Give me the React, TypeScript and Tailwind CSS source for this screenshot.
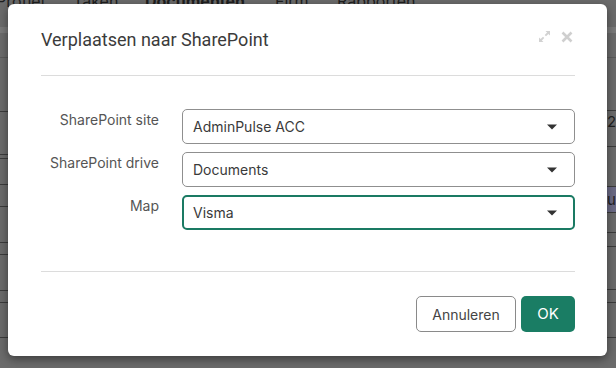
import React from "react";

function Caret() {
  return (
    <svg width="10" height="6" viewBox="0 0 10 6" className="shrink-0">
      <path d="M0 0.5 L10 0.5 L5 5.5 Z" fill="#333" />
    </svg>
  );
}

function Select({ value, active }: { value: string; active?: boolean }) {
  return (
    <div
      className={
        active
          ? "flex-1 h-[35px] rounded-[5px] border-2 border-[#1a7a63] flex items-center pl-[9px] pr-[16px]"
          : "flex-1 h-[35px] rounded-[5px] border border-[#8f8f8f] flex items-center pl-[10px] pr-[17px]"
      }
    >
      <span className="flex-1 text-[14px] text-[#3a3a3a] leading-5">{value}</span>
      <Caret />
    </div>
  );
}

function Row({ label, value, active }: { label: string; value: string; active?: boolean }) {
  return (
    <div className="flex items-start">
      <div className="w-[118px] text-right text-[14px] leading-5 text-[#555] pt-[1px]">{label}</div>
      <div className="w-[23px]" />
      <Select value={value} active={active} />
    </div>
  );
}

function Strip({ lines }: { lines: { h: number; cls: string }[] }) {
  return (
    <div className="flex flex-col">
      {lines.map((l, i) => (
        <div key={i} style={{ height: l.h }} className={l.cls} />
      ))}
    </div>
  );
}

export default function App() {
  const b = "border-b border-[#3c3c3c]";
  const leftLines = [
    { h: 27, cls: "" },
    { h: 6, cls: "bg-[#7a7a7a]" },
    { h: 25, cls: "border-b border-[#5a5a5a]" },
    { h: 54, cls: b },
    { h: 43, cls: b },
    { h: 4, cls: b },
    { h: 26, cls: b },
    { h: 22, cls: b },
    { h: 36, cls: b },
    { h: 12, cls: b },
    { h: 36, cls: b },
    { h: 12, cls: b },
    { h: 35, cls: b },
  ];
  const rightLines = [
    { h: 27, cls: "" },
    { h: 6, cls: "bg-[#7a7a7a]" },
    { h: 25, cls: "border-b border-[#5a5a5a]" },
    { h: 53, cls: b },
    { h: 36, cls: b },
    { h: 40, cls: b },
    { h: 26, cls: "bg-[#6b6a85] border-b border-[#3c3c3c]" },
    { h: 20, cls: b },
    { h: 14, cls: b },
    { h: 43, cls: b },
    { h: 13, cls: b },
    { h: 35, cls: b },
  ];
  return (
    <div
      className="relative w-[616px] h-[368px] overflow-hidden bg-[#6b6b6b]"
      style={{ fontFamily: "Inter, 'Noto Sans', sans-serif" }}
    >
      {/* page behind overlay */}
      <div className="absolute inset-0 flex flex-col">
        <div className="h-0 relative">
          <div className="flex items-end -mt-[9px] text-[16px] text-[#1f1f1f] leading-5 whitespace-nowrap">
            <span className="-ml-[4px] w-[77px]">Profiel</span>
            <span className="w-[72px]">Taken</span>
            <span className="font-bold w-[130px]">Documenten</span>
            <span className="w-[62px]">Firm</span>
            <span>Rapporten</span>
          </div>
        </div>
        <div className="flex flex-1 justify-between">
          <div className="w-[8px]">
            <Strip lines={leftLines} />
          </div>
          <div className="w-[9px] relative">
            <Strip lines={rightLines} />
            <div className="absolute top-[112px] left-0 text-[15px] text-[#1f1f1f] leading-5">20</div>
            <div className="absolute top-[190px] left-0 text-[15px] text-[#1f1f1f] leading-5">ur</div>
          </div>
        </div>
      </div>

      {/* modal */}
      <div className="absolute left-[8px] top-[4px] w-[599px] h-[352px] bg-white rounded-[6px] shadow-[0_3px_10px_rgba(0,0,0,0.45)] flex flex-col px-[33px] pr-[32px]">
        <div className="h-[72px] flex items-center border-b border-[#dcdcdc] shrink-0">
          <div
            className="flex-1 text-[18px] text-[#3b3b3b] leading-6"
            style={{ fontFamily: "Roboto, 'Noto Sans', sans-serif" }}
          >
            Verplaatsen naar SharePoint
          </div>
          <div className="flex items-center gap-[10px] pr-[2px] -mt-[6px]">
            <svg width="13" height="13" viewBox="0 0 13 13">
              <path d="M7.5 1 H12 V5.5 L10.4 3.9 L8 6.3 L6.7 5 L9.1 2.6 Z" fill="#d2d2d2" />
              <path d="M5.5 12 H1 V7.5 L2.6 9.1 L5 6.7 L6.3 8 L3.9 10.4 Z" fill="#d2d2d2" />
            </svg>
            <svg width="12" height="12" viewBox="0 0 12 12">
              <path d="M1.5 1.5 L10.5 10.5 M10.5 1.5 L1.5 10.5" stroke="#cfcfcf" strokeWidth="2.6" />
            </svg>
          </div>
        </div>
        <div className="flex flex-col gap-[8px] pt-[33px] pb-[41px] border-b border-[#dcdcdc]">
          <Row label="SharePoint site" value="AdminPulse ACC" />
          <Row label="SharePoint drive" value="Documents" />
          <Row label="Map" value="Visma" active />
        </div>
        <div className="flex justify-end gap-[5px] pt-[24px]">
          <button className="h-[36px] w-[100px] rounded-[5px] border border-[#8a8a8a] bg-white text-[14px] text-[#444]">
            Annuleren
          </button>
          <button className="h-[36px] w-[54px] rounded-[5px] bg-[#1a7d64] text-[15px] text-white">
            OK
          </button>
        </div>
      </div>
    </div>
  );
}
